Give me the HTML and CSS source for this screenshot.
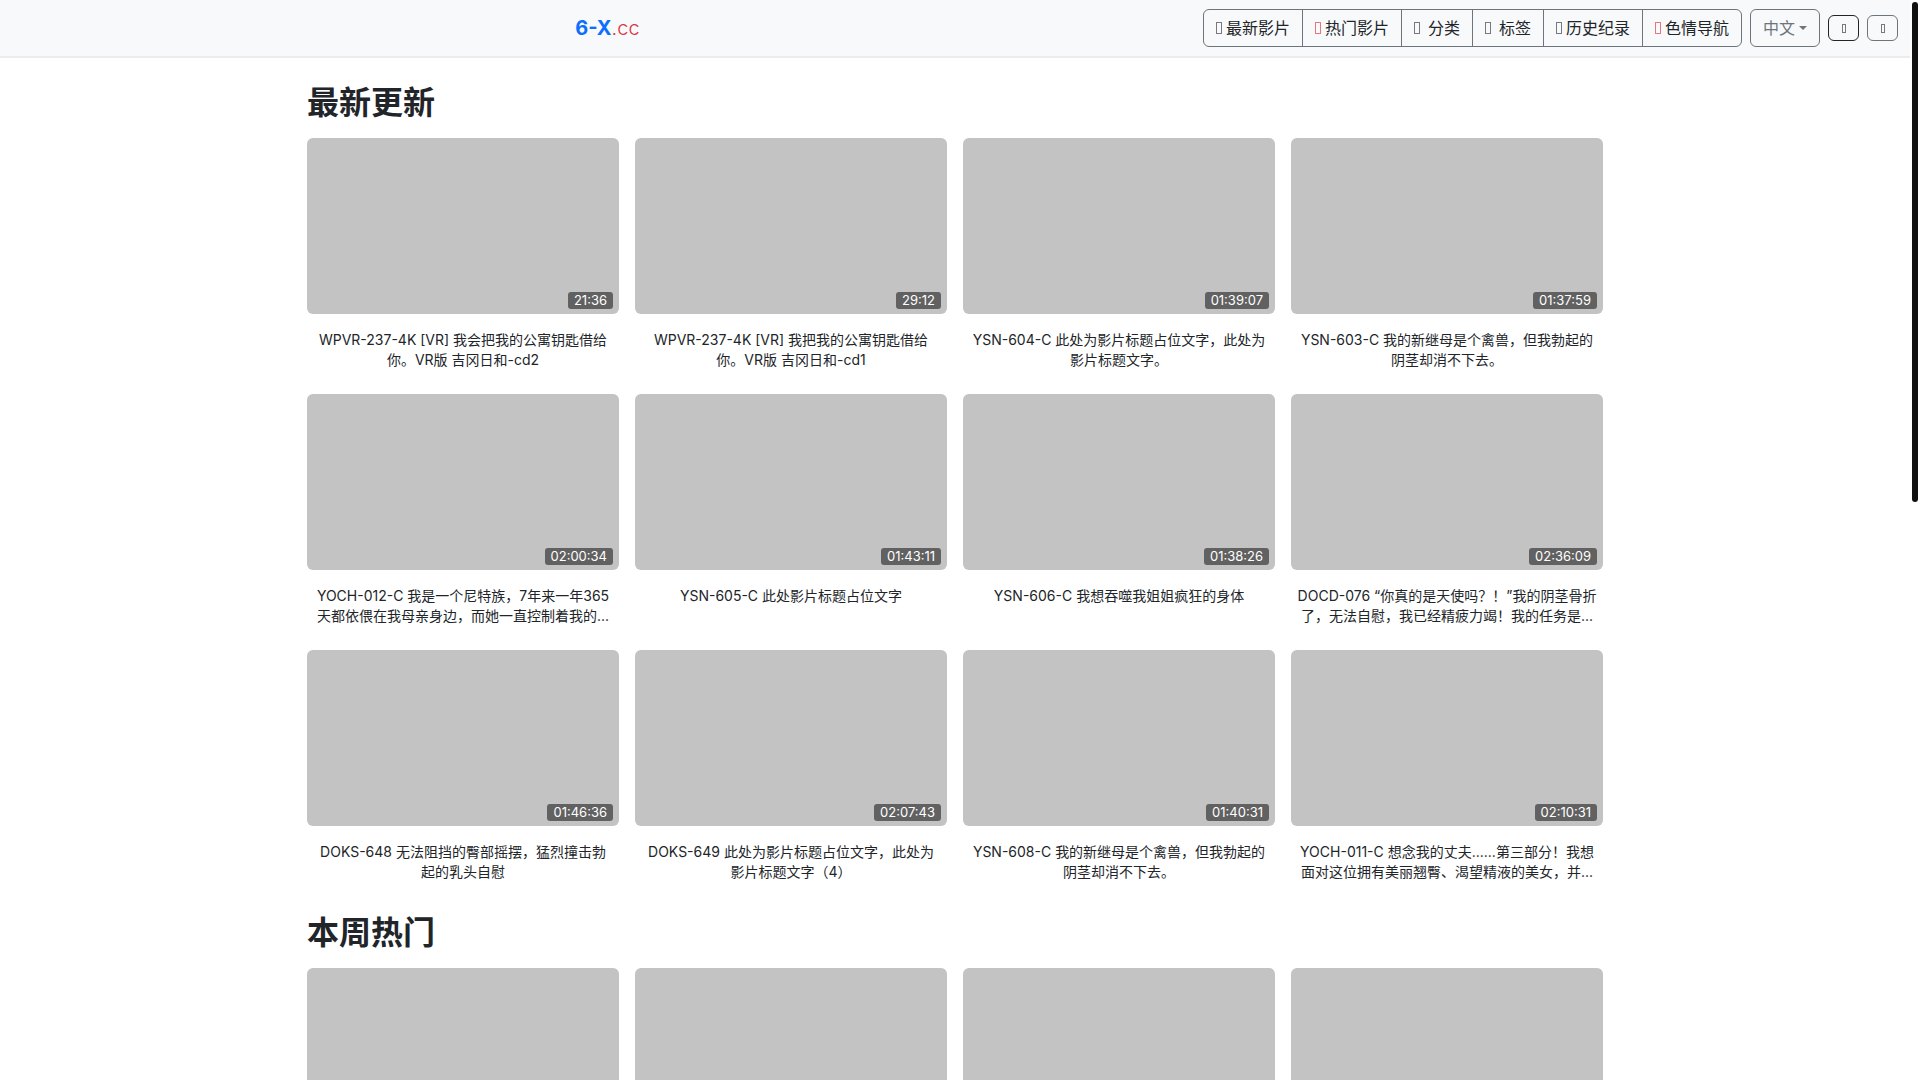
FILE: index.html
```html
<!DOCTYPE html>
<html lang="zh-CN">
<head>
    <meta charset="UTF-8">
    <meta name="viewport" content="width=device-width, initial-scale=1.0">
    <title>6-X.cc</title>
    <link rel="stylesheet" href="styles.css">
</head>
<body>
    <header class="navbar">
        <div class="brand"><a href="#"><b>6-X</b><span>.cc</span></a></div>
        <nav class="btn-group">
            <a href="#"><svg class="icon" viewBox="0 0 6 12"><rect x="0.5" y="0.5" width="5" height="11"/></svg>最新影片</a>
            <a href="#"><svg class="icon red" viewBox="0 0 6 12"><rect x="0.5" y="0.5" width="5" height="11"/></svg>热门影片</a>
            <a href="#" class="wide"><svg class="icon" viewBox="0 0 6 12"><rect x="0.5" y="0.5" width="5" height="11"/></svg>分类</a>
            <a href="#" class="wide"><svg class="icon" viewBox="0 0 6 12"><rect x="0.5" y="0.5" width="5" height="11"/></svg>标签</a>
            <a href="#"><svg class="icon" viewBox="0 0 6 12"><rect x="0.5" y="0.5" width="5" height="11"/></svg>历史纪录</a>
            <a href="#"><svg class="icon red" viewBox="0 0 6 12"><rect x="0.5" y="0.5" width="5" height="11"/></svg>色情导航</a>
        </nav>
        <button class="lang" type="button">中文</button>
        <button class="btn-sm dark" type="button" aria-label="搜索"><svg class="icon small" viewBox="0 0 4 9"><rect x="0.5" y="0.5" width="3" height="8"/></svg></button>
        <button class="btn-sm" type="button" aria-label="主题"><svg class="icon small" viewBox="0 0 4 9"><rect x="0.5" y="0.5" width="3" height="8"/></svg></button>
    </header>

    <main class="container">
        <h2>最新更新</h2>
        <div class="videos">
            <div class="video">
                <a href="#" class="thumb"><span class="duration">21:36</span></a>
                <a href="#" class="title">WPVR-237-4K [VR] 我会把我的公寓钥匙借给你。VR版 吉冈日和-cd2</a>
            </div>
            <div class="video">
                <a href="#" class="thumb"><span class="duration">29:12</span></a>
                <a href="#" class="title">WPVR-237-4K [VR] 我把我的公寓钥匙借给<br>你。VR版 吉冈日和-cd1</a>
            </div>
            <div class="video">
                <a href="#" class="thumb"><span class="duration">01:39:07</span></a>
                <a href="#" class="title">YSN-604-C 此处为影片标题占位文字，此处为影片标题文字。</a>
            </div>
            <div class="video">
                <a href="#" class="thumb"><span class="duration">01:37:59</span></a>
                <a href="#" class="title">YSN-603-C 我的新继母是个禽兽，但我勃起的阴茎却消不下去。</a>
            </div>
            <div class="video">
                <a href="#" class="thumb"><span class="duration">02:00:34</span></a>
                <a href="#" class="title">YOCH-012-C 我是一个尼特族，7年来一年365天都依偎在我母亲身边，而她一直控制着我的...</a>
            </div>
            <div class="video">
                <a href="#" class="thumb"><span class="duration">01:43:11</span></a>
                <a href="#" class="title">YSN-605-C 此处影片标题占位文字</a>
            </div>
            <div class="video">
                <a href="#" class="thumb"><span class="duration">01:38:26</span></a>
                <a href="#" class="title">YSN-606-C 我想吞噬我姐姐疯狂的身体</a>
            </div>
            <div class="video">
                <a href="#" class="thumb"><span class="duration">02:36:09</span></a>
                <a href="#" class="title">DOCD-076 “你真的是天使吗？！”我的阴茎骨折了，无法自慰，我已经精疲力竭！我的任务是...</a>
            </div>
            <div class="video">
                <a href="#" class="thumb"><span class="duration">01:46:36</span></a>
                <a href="#" class="title">DOKS-648 无法阻挡的臀部摇摆，猛烈撞击勃<br>起的乳头自慰</a>
            </div>
            <div class="video">
                <a href="#" class="thumb"><span class="duration">02:07:43</span></a>
                <a href="#" class="title">DOKS-649 此处为影片标题占位文字，此处为<br>影片标题文字（4）</a>
            </div>
            <div class="video">
                <a href="#" class="thumb"><span class="duration">01:40:31</span></a>
                <a href="#" class="title">YSN-608-C 我的新继母是个禽兽，但我勃起的阴茎却消不下去。</a>
            </div>
            <div class="video">
                <a href="#" class="thumb"><span class="duration">02:10:31</span></a>
                <a href="#" class="title">YOCH-011-C 想念我的丈夫......第三部分！我想面对这位拥有美丽翘臀、渴望精液的美女，并...</a>
            </div>
        </div>

        <h2>本周热门</h2>
        <div class="videos">
            <div class="video"><a href="#" class="thumb"></a></div>
            <div class="video"><a href="#" class="thumb"></a></div>
            <div class="video"><a href="#" class="thumb"></a></div>
            <div class="video"><a href="#" class="thumb"></a></div>
        </div>
    </main>

    <div class="scrollbar"></div>
</body>
</html>
```
FILE: styles.css
```css
* {
    box-sizing: border-box;
}
body {
    margin: 0;
    padding-right: 10px;
    height: 100vh;
    overflow: hidden;
    font-family: Inter, "Noto Sans CJK SC", sans-serif;
    font-size: 16px;
    line-height: 24px;
    color: #212529;
    background-color: #fff;
}
a {
    color: inherit;
    text-decoration: none;
}

/* Navbar */
.navbar {
    display: flex;
    align-items: center;
    gap: 8px;
    padding: 9px 12px;
    background-color: #f8f9fa;
    border-bottom: 2px solid #ececec;
}
.brand {
    flex: 1;
    padding-left: 8px;
    text-align: center;
    font-size: 20px;
}
.brand b {
    color: #0d6efd;
}
.brand span {
    font-weight: 300;
    color: #dc3545;
}
.btn-group {
    display: flex;
    border: 1px solid #6c757d;
    border-radius: 6px;
}
.btn-group a {
    display: flex;
    align-items: center;
    gap: 4px;
    padding: 6px 12px;
}
.btn-group a + a {
    border-left: 1px solid #6c757d;
}
.btn-group .wide {
    gap: 8px;
}
.icon {
    width: 6px;
    height: 12px;
    fill: none;
    stroke: #77797c;
}
.icon.red {
    stroke: #e77681;
}
.icon.small {
    width: 4px;
    height: 9px;
}
button {
    font: inherit;
    color: #6c757d;
    background: none;
    border: 1px solid #6c757d;
    border-radius: 6px;
    cursor: pointer;
}
.lang {
    display: flex;
    align-items: center;
    gap: 4px;
    padding: 6px 12px;
}
.lang::after {
    content: "";
    border-top: 4px solid;
    border-left: 4px solid transparent;
    border-right: 4px solid transparent;
}
.btn-sm {
    display: flex;
    align-items: center;
    justify-content: center;
    width: 31px;
    height: 26px;
    padding: 0;
}
.btn-sm.dark {
    border-color: #212529;
}

/* Video list */
.container {
    max-width: 1320px;
    margin: 0 auto;
    padding: 18px 12px 0;
}
h2 {
    margin: 8px 0 16px;
    font-size: 32px;
    line-height: 38px;
}
.videos {
    display: grid;
    grid-template-columns: repeat(4, 1fr);
    column-gap: 16px;
}
.video {
    padding-bottom: 24px;
}
.thumb {
    display: block;
    position: relative;
    height: 176px;
    background-color: #c3c3c3;
    border-radius: 6px;
}
.duration {
    position: absolute;
    right: 6px;
    bottom: 5px;
    padding: 0 6px;
    font-size: 13px;
    line-height: 17px;
    color: #fff;
    background-color: rgba(0, 0, 0, 0.5);
    border-radius: 3px;
}
.title {
    display: block;
    height: 40px;
    margin-top: 16px;
    padding: 0 6px;
    overflow: hidden;
    font-size: 14px;
    line-height: 20px;
    text-align: center;
}

/* Page scrollbar */
.scrollbar {
    position: fixed;
    top: 2px;
    right: 2px;
    width: 6px;
    height: 500px;
    background-color: #111;
    border-radius: 3px;
}
```
